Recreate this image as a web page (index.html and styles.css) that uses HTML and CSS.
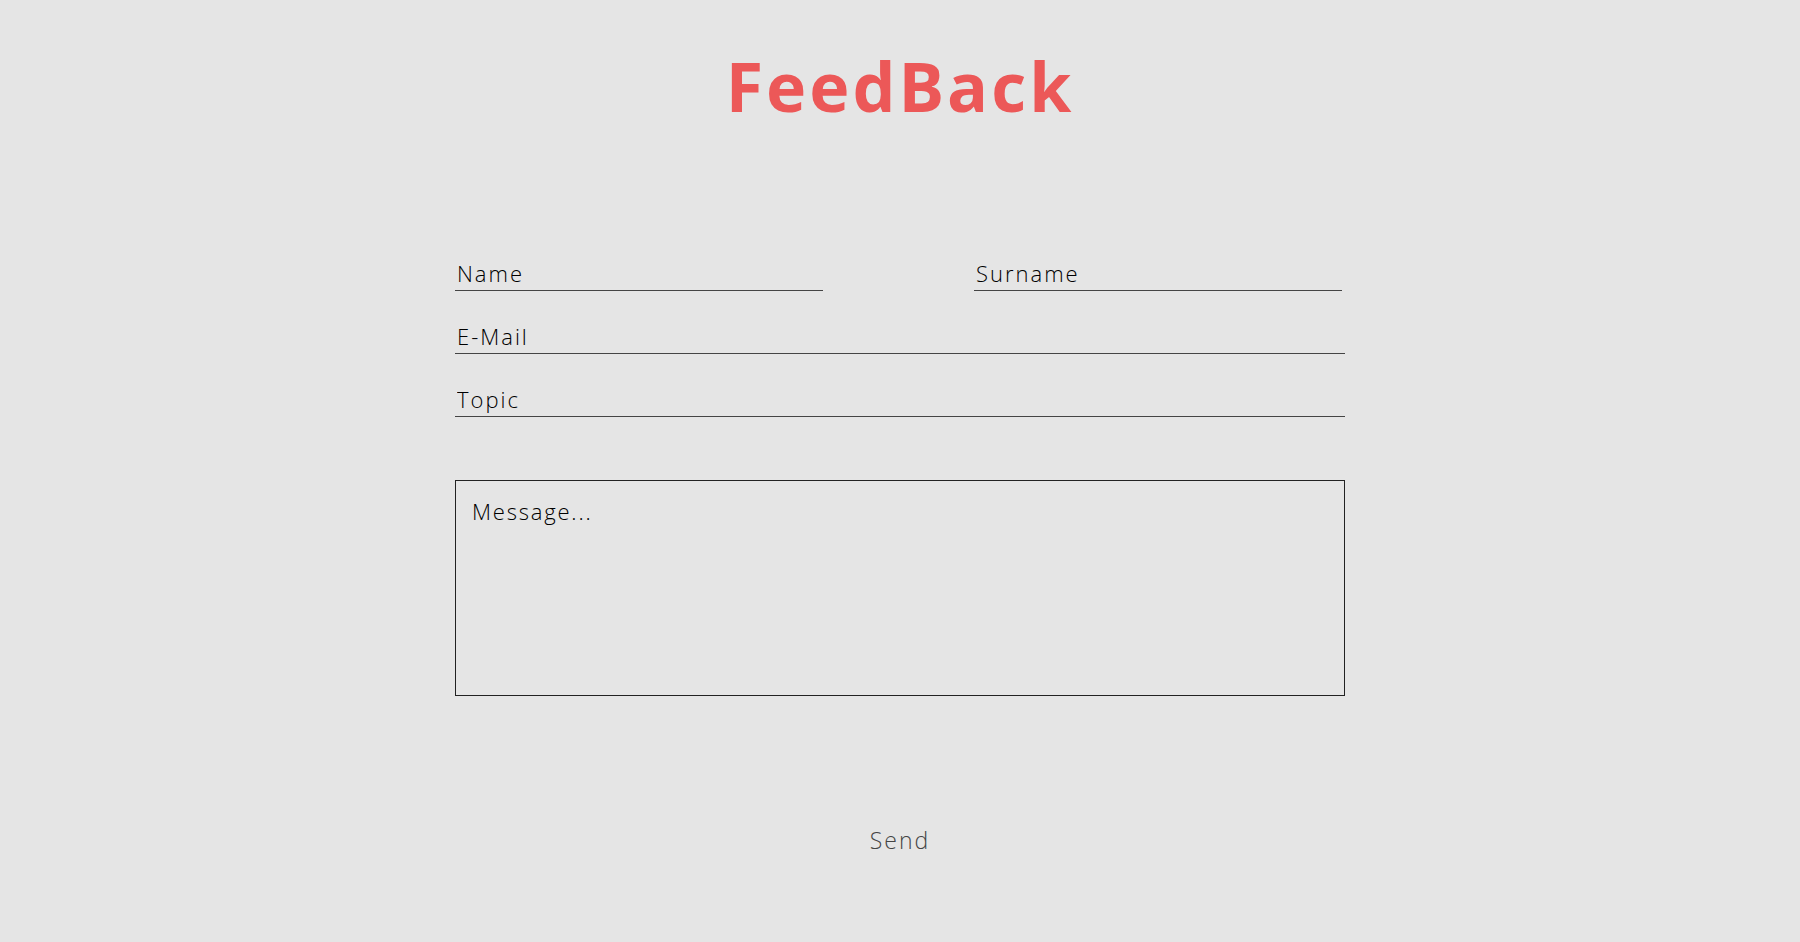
FILE: index.html
```html
<!DOCTYPE html>
<html lang="en">
<head>
<meta charset="utf-8">
<title>FeedBack</title>
<link rel="stylesheet" href="styles.css">
</head>
<body>
<main class="page">
  <h1 class="title">FeedBack</h1>
  <form class="form">
    <div class="row">
      <input class="field half" type="text" placeholder="Name">
      <input class="field half" type="text" placeholder="Surname">
    </div>
    <input class="field" type="email" placeholder="E-Mail">
    <input class="field" type="text" placeholder="Topic">
    <textarea class="message" placeholder="Message..."></textarea>
    <button class="send" type="button">Send</button>
  </form>
</main>
</body>
</html>
```

FILE: styles.css
```css
html, body {
  margin: 0;
  padding: 0;
  background: #e5e5e5;
}
body {
  font-family: "Open Sans", "Lato", sans-serif;
  color: #111;
}
.page {
  display: flex;
  flex-direction: column;
  align-items: center;
}
.title {
  margin: 46px 0 0;
  font-size: 68px;
  line-height: 80px;
  font-weight: 700;
  color: #ec5858;
  letter-spacing: 3px;
}
.form {
  width: 890px;
  margin-top: 136px;
  display: flex;
  flex-direction: column;
}
.row {
  display: flex;
  justify-content: space-between;
  padding-right: 3px;
}
.field {
  box-sizing: border-box;
  height: 29px;
  margin: 0 0 34px;
  padding: 0 2px 6px;
  border: none;
  border-bottom: 1px solid #444;
  background: transparent;
  font-family: inherit;
  font-size: 22px;
  font-weight: 300;
  letter-spacing: 2px;
  color: #000;
  outline: none;
}
.field.half {
  width: 368px;
}
.field::placeholder,
.message::placeholder {
  color: #000;
  opacity: 1;
}
.message {
  box-sizing: border-box;
  width: 890px;
  height: 216px;
  margin-top: 29px;
  padding: 15px 16px;
  border: 1px solid #222;
  background: transparent;
  font-family: inherit;
  font-size: 22px;
  font-weight: 300;
  letter-spacing: 1.8px;
  resize: none;
  outline: none;
}
.send {
  align-self: center;
  margin-top: 128px;
  padding: 0;
  border: none;
  background: transparent;
  font-family: inherit;
  font-size: 23px;
  font-weight: 300;
  letter-spacing: 2px;
  color: #444;
  cursor: pointer;
}
```
